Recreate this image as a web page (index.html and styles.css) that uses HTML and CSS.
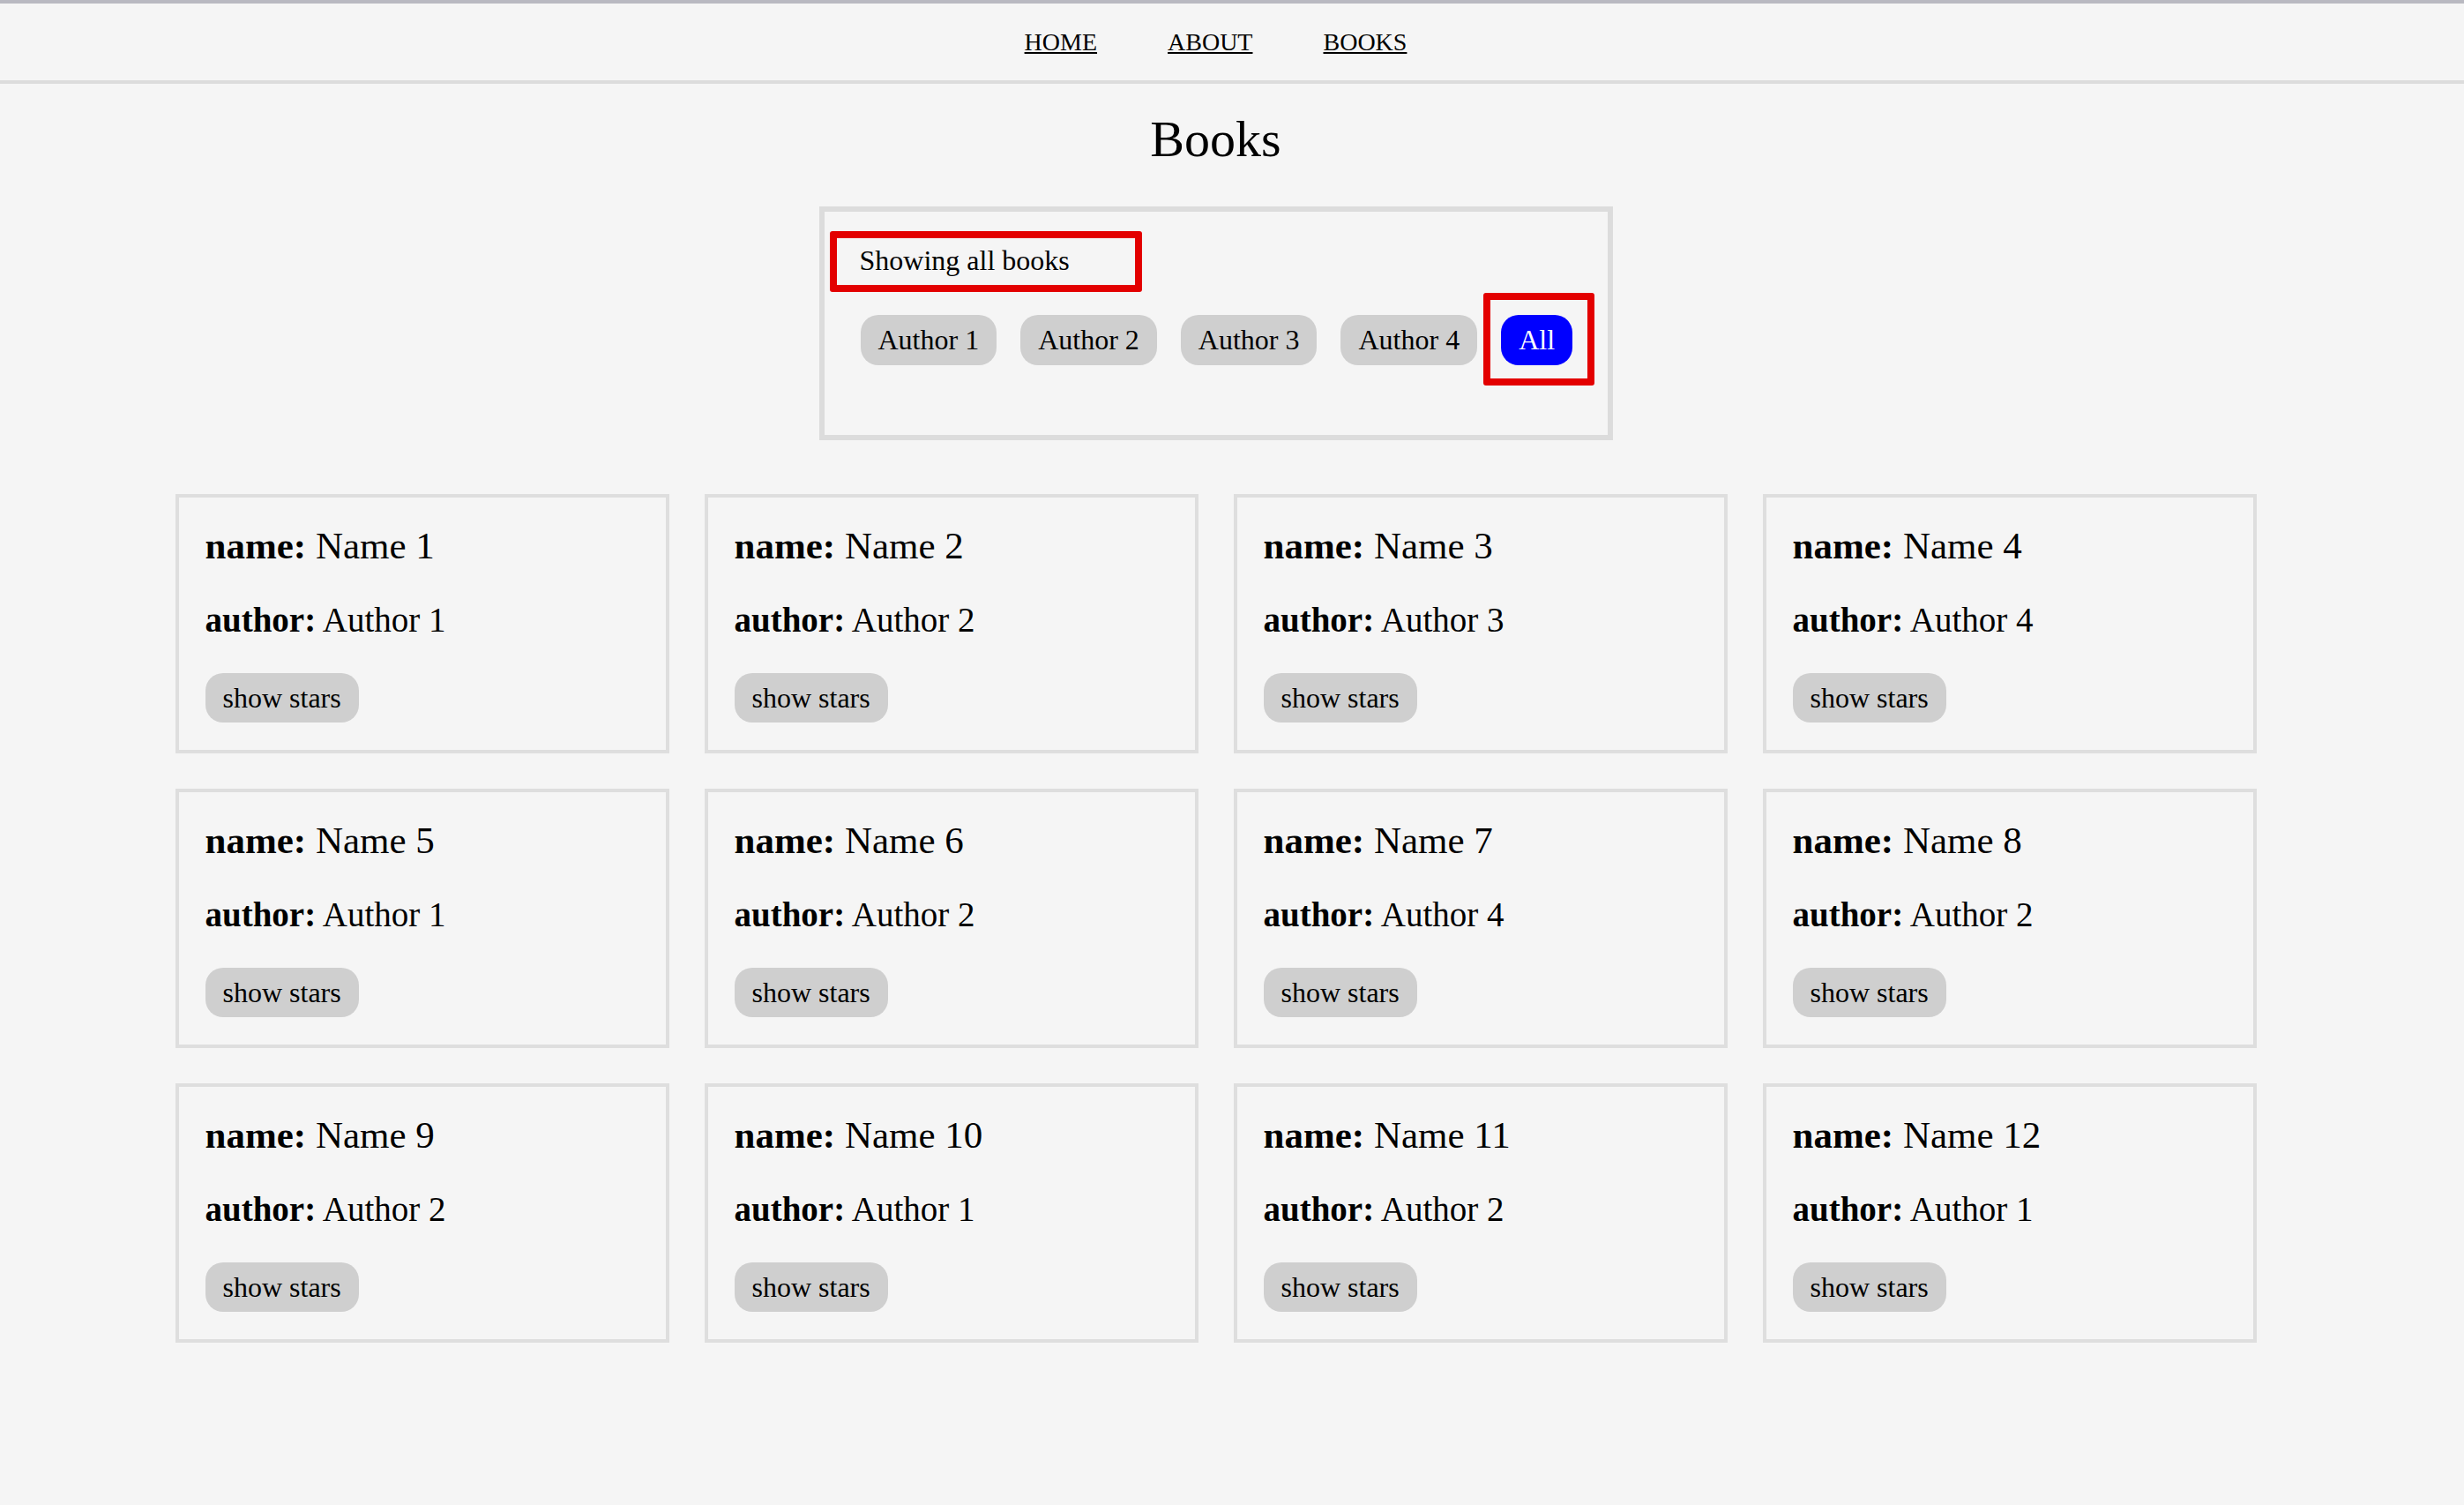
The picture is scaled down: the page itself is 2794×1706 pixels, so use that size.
FILE: index.html
```html
<!DOCTYPE html>
<html lang="en">
<head>
<meta charset="utf-8">
<title>Books</title>
<link rel="stylesheet" href="styles.css">
</head>
<body>
<header class="site-header">
  <nav class="nav">
    <a href="#" class="nav-link">HOME</a>
    <a href="#" class="nav-link">ABOUT</a>
    <a href="#" class="nav-link">BOOKS</a>
  </nav>
</header>
<main class="page">
  <h1 class="title">Books</h1>
  <section class="filter">
    <p class="filter-status"><span class="filter-text">Showing all books</span></p>
    <div class="filter-buttons">
      <button class="pill">Author 1</button>
      <button class="pill">Author 2</button>
      <button class="pill">Author 3</button>
      <button class="pill">Author 4</button>
      <span class="highlight"><button class="pill pill-active">All</button></span>
    </div>
  </section>
  <section class="grid">
    <article class="card"><p class="card-name"><b>name:</b> Name 1</p><p class="card-author"><b>author:</b> Author 1</p><button class="pill">show stars</button></article>
    <article class="card"><p class="card-name"><b>name:</b> Name 2</p><p class="card-author"><b>author:</b> Author 2</p><button class="pill">show stars</button></article>
    <article class="card"><p class="card-name"><b>name:</b> Name 3</p><p class="card-author"><b>author:</b> Author 3</p><button class="pill">show stars</button></article>
    <article class="card"><p class="card-name"><b>name:</b> Name 4</p><p class="card-author"><b>author:</b> Author 4</p><button class="pill">show stars</button></article>
    <article class="card"><p class="card-name"><b>name:</b> Name 5</p><p class="card-author"><b>author:</b> Author 1</p><button class="pill">show stars</button></article>
    <article class="card"><p class="card-name"><b>name:</b> Name 6</p><p class="card-author"><b>author:</b> Author 2</p><button class="pill">show stars</button></article>
    <article class="card"><p class="card-name"><b>name:</b> Name 7</p><p class="card-author"><b>author:</b> Author 4</p><button class="pill">show stars</button></article>
    <article class="card"><p class="card-name"><b>name:</b> Name 8</p><p class="card-author"><b>author:</b> Author 2</p><button class="pill">show stars</button></article>
    <article class="card"><p class="card-name"><b>name:</b> Name 9</p><p class="card-author"><b>author:</b> Author 2</p><button class="pill">show stars</button></article>
    <article class="card"><p class="card-name"><b>name:</b> Name 10</p><p class="card-author"><b>author:</b> Author 1</p><button class="pill">show stars</button></article>
    <article class="card"><p class="card-name"><b>name:</b> Name 11</p><p class="card-author"><b>author:</b> Author 2</p><button class="pill">show stars</button></article>
    <article class="card"><p class="card-name"><b>name:</b> Name 12</p><p class="card-author"><b>author:</b> Author 1</p><button class="pill">show stars</button></article>
  </section>
</main>
</body>
</html>
```

FILE: styles.css
```css
*, *::before, *::after {
  box-sizing: border-box;
}

html, body {
  margin: 0;
  padding: 0;
  background: #f5f5f5;
  color: #000;
  font-family: "Liberation Serif", "Times New Roman", serif;
}

body {
  min-height: 1706px;
}

.site-header {
  border-top: 4px solid #b9b9c1;
  border-bottom: 4px solid #dcdcdc;
  padding: 28px 37px 27px 0;
}

.nav {
  display: flex;
  justify-content: center;
  gap: 80px;
  font-size: 28px;
  line-height: 32px;
}

.nav-link {
  color: #000;
  text-decoration: underline;
}

.page {
  display: flex;
  flex-direction: column;
  align-items: center;
  padding-right: 37px;
}

.title {
  font-size: 58px;
  font-weight: normal;
  line-height: 66px;
  margin: 30px 0 43px;
}

.filter {
  width: 900px;
  border: 6px solid #dcdcdc;
  padding: 37px 40px 79px;
  display: flex;
  flex-direction: column;
  align-items: flex-start;
}

.filter-status {
  margin: 0 0 43px;
  font-size: 32px;
  line-height: 37px;
}

.filter-text {
  position: relative;
  display: inline-block;
}

.filter-text::after {
  content: "";
  position: absolute;
  left: -34px;
  top: -15px;
  width: 354px;
  height: 69px;
  border: 8px solid #e30000;
  border-radius: 3px;
}

.filter-buttons {
  display: flex;
  gap: 27px;
  align-items: center;
  padding-left: 1px;
  white-space: nowrap;
}

.filter-buttons > * {
  flex-shrink: 0;
}

.highlight {
  position: relative;
  display: inline-flex;
}

.highlight::after {
  content: "";
  position: absolute;
  left: -20px;
  top: -25px;
  width: 126px;
  height: 105px;
  border: 8px solid #e30000;
  border-radius: 3px;
}

.pill {
  font-family: "Liberation Serif", "Times New Roman", serif;
  font-size: 32px;
  line-height: 37px;
  padding: 10px 20px;
  border: none;
  border-radius: 20px;
  background: #cfcfcf;
  color: #000;
  margin: 0;
  white-space: nowrap;
}

.pill-active {
  background: #0000ff;
  color: #fff;
}

.grid {
  display: grid;
  grid-template-columns: repeat(4, 560px);
  gap: 40px;
  margin-top: 61px;
}

.card {
  border: 4px solid #dedede;
  padding: 30px;
  display: flex;
  flex-direction: column;
  align-items: flex-start;
  height: 294px;
}

.card-name {
  font-size: 43px;
  line-height: 49px;
  margin: 0 0 37px;
}

.card-author {
  font-size: 39px;
  line-height: 45px;
  margin: 0 0 38px;
}

.card .pill {
  line-height: 36px;
}
```
